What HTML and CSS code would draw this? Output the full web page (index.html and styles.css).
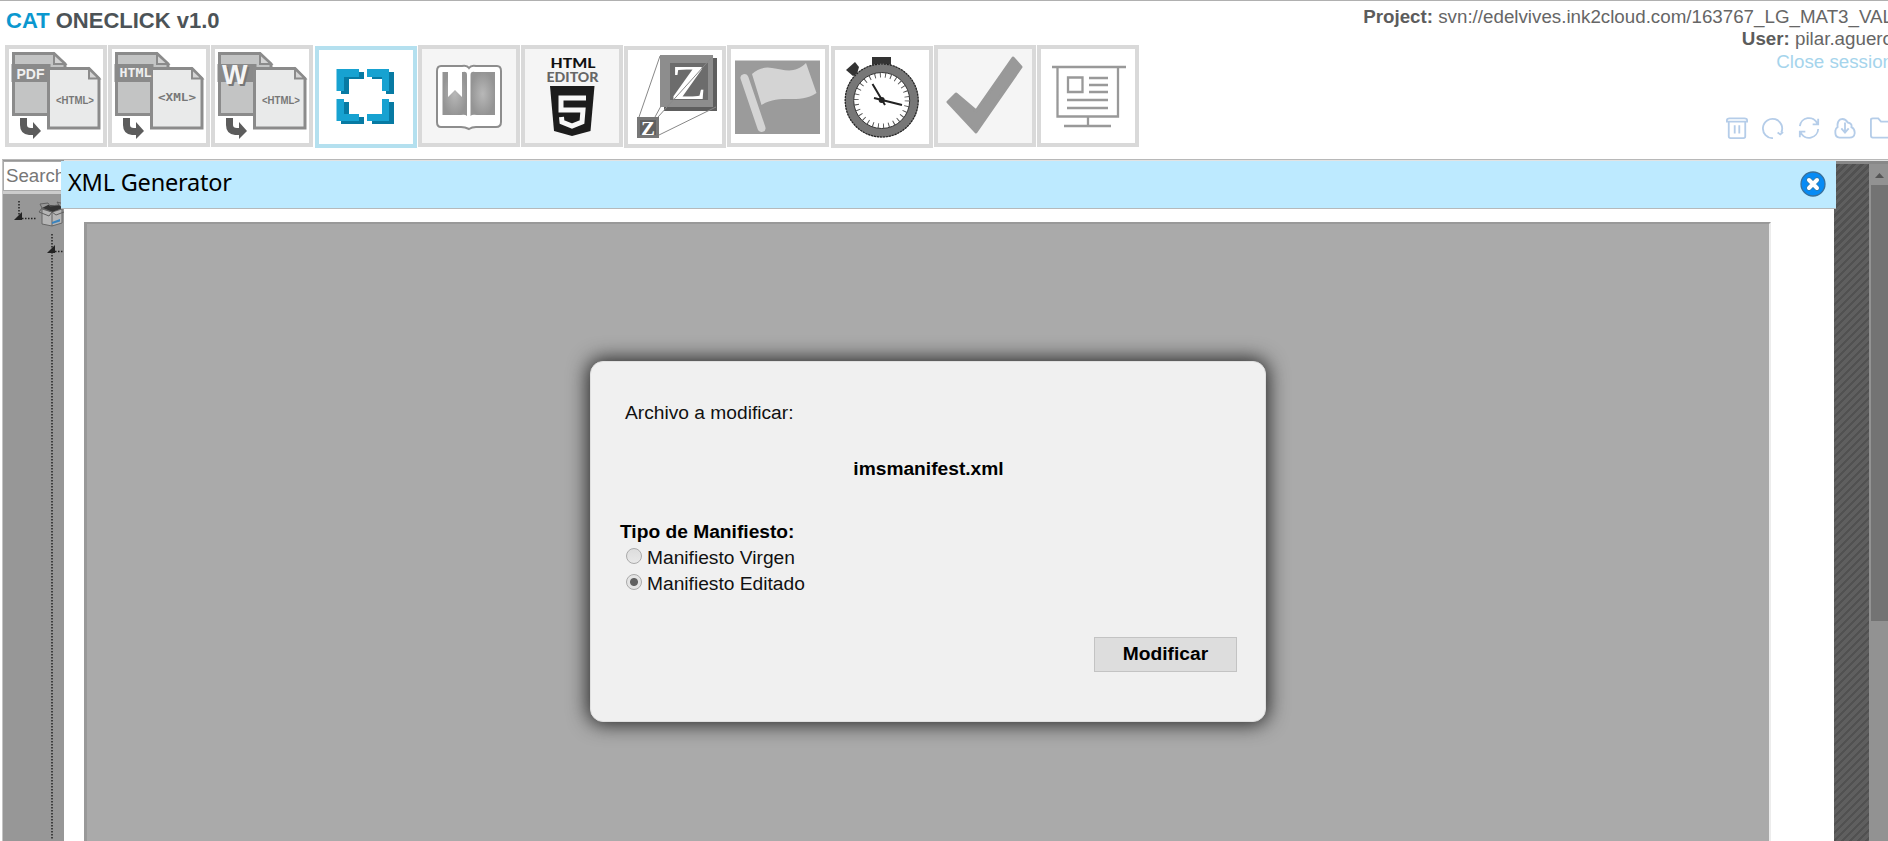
FILE: index.html
```html
<!DOCTYPE html>
<html lang="es">
<head>
<meta charset="utf-8">
<title>CAT ONECLICK v1.0</title>
<link rel="stylesheet" href="styles.css">
</head>
<body>
<svg class="defs" width="0" height="0">
  <symbol id="convert" viewBox="0 0 102 102">
    <path d="M8.5 8.500H49L60 19V35H45V69.500H8.500Z" fill="#c3c4c4" stroke="#8b8b8b" stroke-width="3"/>
    <path d="M49 9V19H60Z" fill="#d3d3d3" stroke="#8b8b8b" stroke-width="2"/>
    <rect x="6.500" y="19" width="39" height="18" fill="#8a8a8a"/>
    <path d="M43.500 23.500H84L94 33.500V83H43.500Z" fill="#e9eaea" stroke="#8b8b8b" stroke-width="3"/>
    <path d="M84 24V33.500H94Z" fill="#d5d5d5" stroke="#8b8b8b" stroke-width="2"/>
    <path d="M15 73H22V80Q22 83 26 83H28V77L36 86L28 94V90H24Q15 89 15 80Z" fill="#5c5c5c"/>
  </symbol>
</svg>
<div class="app">
  <header class="top">
    <div class="brand">
      <h1 class="title"><span class="accent">CAT</span> ONECLICK v1.0</h1>
      <nav class="tools">
        <button class="tool"><svg viewBox="0 0 102 102"><use href="#convert"/><text x="11.500" y="34" class="badge" textLength="28" lengthAdjust="spacingAndGlyphs">PDF</text><text x="51" y="59" class="tag" textLength="38" lengthAdjust="spacingAndGlyphs">&lt;HTML&gt;</text></svg></button>
        <button class="tool"><svg viewBox="0 0 102 102"><use href="#convert"/><text x="11.500" y="32" class="badge mono" textLength="32" lengthAdjust="spacingAndGlyphs">HTML</text><text x="50" y="56" class="tag mono" textLength="38" lengthAdjust="spacingAndGlyphs">&lt;XML&gt;</text></svg></button>
        <button class="tool"><svg viewBox="0 0 102 102"><use href="#convert"/><text x="13" y="41" class="word-shadow">W</text><text x="11" y="39" class="word">W</text><text x="51" y="59" class="tag" textLength="38" lengthAdjust="spacingAndGlyphs">&lt;HTML&gt;</text></svg></button>
        <button class="tool active"><svg viewBox="0 0 102 102">
          <g fill="#077aa3"><path d="M26 26H49V33H34V48H26Z"/><path d="M57 26H79V48H71V33H57Z"/><path d="M26 56H34V71H49V78H26Z"/><path d="M71 56H79V78H57V71H71Z"/></g>
          <g fill="#17a2d1"><path d="M21.500 23H44V31H29V45H21.500Z"/><path d="M52 23H74V45H67V31H52Z"/><path d="M21.500 53H29V68H44V75H21.500Z"/><path d="M67 53H74V75H52V68H67Z"/></g></svg></button>
        <button class="tool gray"><svg viewBox="0 0 102 102">
          <defs><radialGradient id="page"><stop offset="0" stop-color="#b8b8b8"/><stop offset="1" stop-color="#949494"/></radialGradient></defs>
          <path d="M23 21H44Q49 20 51 23Q53 20 58 21H79Q83 21 83 26V77Q83 82 78 82H58Q54 82 51 84Q47 82 43 82H23Q19 82 19 77V26Q19 21 23 21Z" fill="#fff" stroke="#8d8d8d" stroke-width="2"/>
          <path d="M24.500 27H45Q49 26 49 30V71Q47 69 43 70H24.500Z" fill="url(#page)"/><path d="M77 27H57Q52.500 26 52.500 30V71Q54 69 59 70H77Z" fill="url(#page)"/>
          <path d="M30 24H44V52L37 45L30 52Z" fill="#fff"/></svg></button>
        <button class="tool gray"><svg viewBox="0 0 102 102">
          <text x="29.500" y="22.500" class="h5-a" textLength="45" lengthAdjust="spacingAndGlyphs">HTML</text>
          <text x="25.500" y="37" class="h5-b" textLength="52" lengthAdjust="spacingAndGlyphs">EDITOR</text>
          <path d="M29 41H73.500L69.500 86L51 91L33 86Z" fill="#1c1c1c"/>
          <path d="M65 53H40V65H62L61 77L51 81L41 77L40.500 72" fill="none" stroke="#f7f7f7" stroke-width="5"/></svg></button>
        <button class="tool low"><svg viewBox="0 0 102 102">
          <path d="M40 12H93V65H40Z" fill="#5e5e5e"/><path d="M36 9H89V61H36Z" fill="#8d8d8d"/><path d="M46 17H84V54H46Z" fill="#6c6c6c"/>
          <text x="47" y="53" class="zed" font-size="48" textLength="35" lengthAdjust="spacingAndGlyphs">Z</text>
          <path d="M13 71H35V92H13Z" fill="#777"/><path d="M16 74H32V89H16Z" fill="#606060"/><text x="17" y="88.500" class="zed" font-size="19" textLength="14" lengthAdjust="spacingAndGlyphs">Z</text>
          <path d="M15 71L36 10M31 71L37 60M34 71L89 10M35 89L92 61" fill="none" stroke="#888" stroke-width="1"/></svg></button>
        <button class="tool"><svg viewBox="0 0 102 102">
          <path d="M8 15.500H93V89H8Z" fill="#9b9b9b"/><path d="M17.500 33L34.500 83" stroke="#d4d4d4" stroke-width="8" stroke-linecap="round"/>
          <path d="M25 29Q34 21 45 23C58 25 68 29 79 18L89.500 48C72 60 53 48 34.500 60Z" fill="#d4d4d4"/></svg></button>
        <button class="tool low"><svg viewBox="0 0 102 102">
          <path d="M41 11H60V20H41Z" fill="#333"/><path d="M15 24L24 16L28 21L26 28L22 30Z" fill="#333"/>
          <circle cx="50.700" cy="54.500" r="32.500" fill="#fff" stroke="#777" stroke-width="9"/>
          <circle cx="50.700" cy="54.500" r="36.500" fill="none" stroke="#222" stroke-width="1.200" stroke-dasharray="2 1"/>
          <circle cx="50.700" cy="54.500" r="28" fill="none" stroke="#333" stroke-width="1"/>
          <circle cx="50.700" cy="54.500" r="25.500" fill="none" stroke="#555" stroke-width="5" stroke-dasharray="1 4.340"/>
          <path d="M41.500 38L54 59M43 52L71 59" stroke="#222" stroke-width="2"/><circle cx="50.700" cy="54" r="3" fill="#222"/></svg></button>
        <button class="tool gray"><svg viewBox="0 0 102 102"><path d="M14 57L22 49L42 66L79 13L87 22L42 87Z" fill="#999" stroke="#999" stroke-width="3" stroke-linejoin="round"/></svg></button>
        <button class="tool"><svg viewBox="0 0 102 102"><path d="M15 22H89M20.500 22V71.500H81V22M51 71V81M27 81H74M31 32.500H45.500V47H31ZM52 33H71M52 40H71M52 47H71M30 55H71M30 63H71" fill="none" stroke="#999" stroke-width="2.300"/></svg></button>
      </nav>
    </div>
    <div class="account">
      <div><b>Project:</b> svn://edelvives.ink2cloud.com/163767_LG_MAT3_VAL</div>
      <div><b>User:</b> pilar.aguero</div>
      <a class="logout">Close session</a>
      <div class="actions">
        <svg viewBox="0 0 24 24"><path d="M1 3.500Q1 1.500 4 1.500H20Q23 1.500 23 3.500V5H1ZM3 5V21Q3 23 5 23H19Q21 23 21 21V5M9.500 9V18M14.500 9V18"/></svg>
        <svg viewBox="0 0 24 24"><path d="M12 23A10.500 10.500 0 1 1 21 17M17 17L20 19L23 16.500"/></svg>
        <svg viewBox="0 0 24 24"><path d="M2 10A10 10 0 0 1 21 7M22 2V8H16M22 13A10 10 0 0 1 3 17M2 22V16H8"/></svg>
        <svg viewBox="0 0 24 24"><path d="M6 22.500Q1 22 1.500 16Q1 13 4 11Q3 5 7 2.500Q12 1 15 6Q20 7 19 11Q23 13 22.500 18Q22 22.500 17 22.500ZM12 6V17M8 12.500L12 17L16 12.500"/></svg>
        <svg viewBox="0 0 24 24"><path d="M1 3Q1 1.500 3 1.500H9L12 5H23V22.500H3Q1 22.500 1 20Z"/></svg>
      </div>
    </div>
  </header>
  <main class="workspace">
    <aside class="side">
      <div class="search">Search</div>
      <svg class="tree" viewBox="0 0 61 647">
        <path d="M16 8V24M19 25.500H34M49 41V647M52 58.500H61" fill="none" stroke="#222" stroke-dasharray="1.500 1.500" stroke-width="1.500"/>
        <path d="M11 27L19 19V27ZM44 60L52 52V60Z" fill="#222"/>
        <path d="M39 16L49 19L59 16V30L49 33L39 31Z" fill="#b5b5b5" stroke="#666"/>
        <path d="M39 15L45 12H56L60 15L49 19Z" fill="#333"/><path d="M39 15L36 19L46 23L49 19L39 15L37 11L45 10L47 13L56 12L54 9L61 11M49 19L53 22L61 19M49 20V33" fill="none" stroke="#606060"/>
        <path d="M49 29L57 26V28.500L49 31Z" fill="#3a83bd"/></svg>
    </aside>
    <div class="hatch"></div>
    <div class="scroll"><svg class="up" viewBox="0 0 17 21"><path d="M4 14L8.500 9L13 14Z" fill="#555"/></svg><div class="thumb"></div></div>
    <section class="window">
      <div class="bar"><span class="caption">XML Generator</span>
        <svg class="close" viewBox="0 0 26 26"><circle cx="13" cy="13" r="12" fill="#078bf5" stroke="#39719c" stroke-width="1.300"/><path d="M9 9L17 17M17 9L9 17" stroke="#347cac" stroke-width="5.500" stroke-linecap="round"/><path d="M9 9L17 17M17 9L9 17" stroke="#fff" stroke-width="4" stroke-linecap="round"/></svg></div>
      <div class="sheet"><div class="frame">
        <form class="card">
          <p class="lead">Archivo a modificar:</p>
          <p class="file">imsmanifest.xml</p>
          <p class="kind">Tipo de Manifiesto:</p>
          <label class="option"><span class="radio"></span>Manifiesto Virgen</label>
          <label class="option"><span class="radio on"></span>Manifiesto Editado</label>
          <button class="submit" type="button">Modificar</button>
        </form>
      </div></div>
    </section>
  </main>
</div>
</body>
</html>
```
FILE: styles.css
```css
* { box-sizing: border-box; }
body { margin: 0; font-family: "Liberation Sans", Arial, sans-serif; font-size: 19.2px; background: #fff; overflow: hidden; }
p { margin: 0; }
.defs { position: absolute; }
.app { width: 1888px; height: 841px; overflow: hidden; display: flex; flex-direction: column; border-top: 1px solid #b0b0b0; }

.top { height: 158px; display: flex; justify-content: space-between; flex: none; }
.brand { padding: 7px 0 0 5px; }
.title { margin: 0; height: 37px; padding-left: 1px; font-size: 22px; line-height: 25px; color: #4c5357; }
.accent { color: #0b98cf; }
.tools { display: grid; grid-template-columns: repeat(11, 102px); column-gap: 1.2px; }
.tool { height: 102px; padding: 0; border: 0; background: #fff; box-shadow: inset 0 0 0 4px #d9d9d9; }
.tool svg { display: block; width: 102px; height: 102px; }
.tool.gray { background: #f5f5f5; }
.tool.low, .tool.active { margin-top: 1px; }
.tool.active { box-shadow: inset 0 0 0 4px #b4e0ef; }
.badge { font: bold 14px "Liberation Sans", sans-serif; fill: #f0f0f0; }
.badge.mono { font: bold 12px "DejaVu Sans Mono", monospace; }
.tag { font: bold 10px "Liberation Sans", sans-serif; fill: #777; }
.tag.mono { font: bold 11px "DejaVu Sans Mono", monospace; }
.word, .word-shadow { font: bold 27px "Liberation Sans", sans-serif; fill: #f5f5f5; }
.word-shadow { fill: #777; }
.h5-a { font: 900 13px Lato, sans-serif; fill: #111; }
.h5-b { font: 900 13px Lato, sans-serif; fill: #666; }
.zed { font-family: "Liberation Serif", serif; font-weight: bold; fill: #fff; }

.account { margin-right: -5px; padding-top: 5px; font-size: 18.75px; line-height: 22.4px; color: #666; text-align: right; white-space: nowrap; }
.account b { color: #5c5c5c; }
.logout { display: block; color: #a5d4ec; }
.actions { display: flex; gap: 14px; margin: 44px 1px 0 0; justify-content: flex-end; }
.actions svg { width: 22px; height: 22px; fill: none; stroke: #b5cde9; stroke-width: 2; }

.workspace { position: relative; flex: 1; display: flex; margin-left: 2px; border-top: 1px solid #b8b8b8; box-shadow: inset 0 1px #e2e2e2; }
.side { width: 62px; border-left: 1px solid #c4c4c4; background: #979797; }
.search { height: 30px; margin-top: 1px; padding-left: 2px; border: 1px solid #aaa; background: #fff; color: #777; font-size: 18.700px; line-height: 27px; box-shadow: 0 3px #ccc; overflow: hidden; }
.tree { display: block; width: 61px; height: 647px; margin-top: 2px; }
.hatch { width: 37px; margin: 1px 0 0 auto; border-top: 3px solid #888; background: repeating-linear-gradient(135deg, #5f5f5f 0 3.500px, #515151 3.500px 5.660px); }
.scroll { width: 19px; margin-top: 1px; padding-left: 2px; border-top: 3px solid #888; background: #929292; }
.up { display: block; width: 17px; height: 21px; }
.thumb { height: 436px; background: #737373; }

.window { position: absolute; left: 59px; top: 1px; width: 1775px; height: 680px; display: flex; flex-direction: column; }
.bar { height: 48px; flex: none; display: flex; align-items: center; justify-content: space-between; padding: 0 10px 1px 7px; background: #bdeaff; border-bottom: 1px solid #b5b9bb; }
.caption { font-family: "Trebuchet MS", "Noto Sans", sans-serif; font-size: 23.5px; letter-spacing: -0.2px; line-height: 32px; padding-bottom: 5px; color: #000; }
.close { width: 26px; height: 26px; }
.sheet { flex: 1; margin: 0 2px 0 3px; padding: 13px 63px 0 20px; background: #fff; display: flex; }
.frame { flex: 1; border: solid #999; border-width: 2px 2px 0 3px; border-right-color: #ececec; background: #aaa; }
.card { display: flex; flex-direction: column; width: 676px; height: 361px; margin: 137px 0 0 503px; padding: 38px 28px 0 29px; border: 1px solid #e0e0e0; border-radius: 13px; background: #f0f0f0; box-shadow: 0 0 20px 2px #222; color: #111; line-height: 26px; }
.lead { padding-left: 5px; }
.file { margin-top: 30px; text-align: center; font-weight: bold; color: #000; }
.kind { margin-top: 37px; font-weight: bold; color: #000; }
.option { display: flex; padding-left: 6px; gap: 5px; }
.radio { width: 16px; height: 16px; margin-top: 3px; border: 1px solid #aaa; border-radius: 50%; background: linear-gradient(#ddd, #e8e8e8); }
.radio.on { background: radial-gradient(circle, #606060 0 3.500px, #e4e4e4 4.500px); }
.submit { align-self: flex-end; width: 143px; height: 35px; margin-top: 40px; padding: 0 0 2px; border: 1px solid #c3c3c3; background: #ddd; font: bold 19.2px "Liberation Sans", Arial, sans-serif; color: #000; }
```
